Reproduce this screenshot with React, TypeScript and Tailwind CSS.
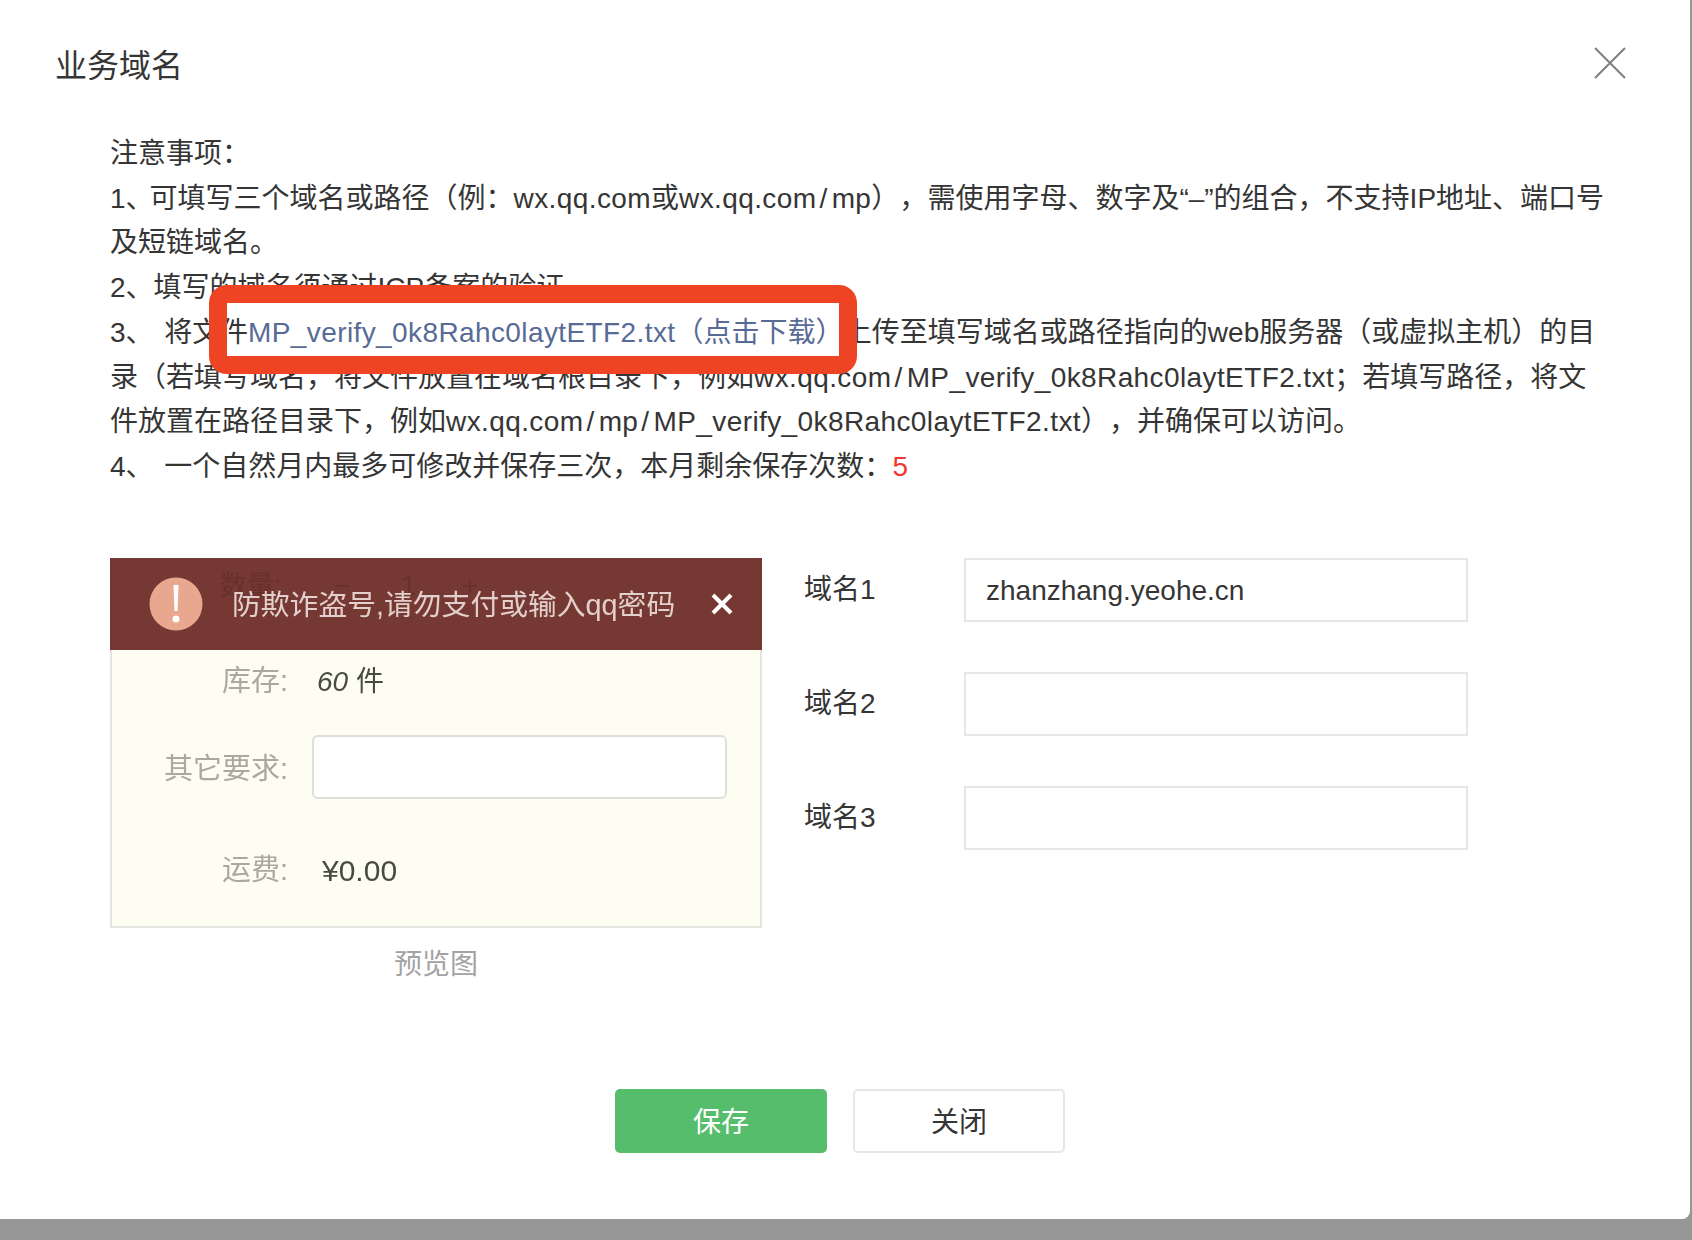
import type { ReactNode } from 'react';

const fontStack = { fontFamily: '"Liberation Sans", "Noto Sans CJK SC", sans-serif' };

const domainRows = [
  { label: '域名1', value: 'zhanzhang.yeohe.cn' },
  { label: '域名2', value: '' },
  { label: '域名3', value: '' },
];

// latin runs in the notes sit a bit wider than Liberation Sans
function Latin({ children }: { children: ReactNode }) {
  return <span className="tracking-[0.4px]">{children}</span>;
}

function Slash() {
  return <span className="ml-[3px] mr-[4px]">/</span>;
}

function PreviewImage() {
  return (
    <div className="w-[652px] h-[370px] bg-[#fdfdf1] border-2 border-t-0 border-[#e4e4e0] box-border">
      {/* Warning banner */}
      <div className="relative h-[92px] -mx-[2px] bg-[#753833] flex items-center blur-[0.5px]">
        {/* faded form row showing through the banner */}
        <div className="absolute left-[110px] top-[8px] flex items-center text-[27px] text-[#683029]">
          <span>数量:</span>
          <span className="ml-[54px]">−</span>
          <span className="ml-[50px]">1</span>
          <span className="ml-[46px]">+</span>
        </div>
        <svg className="ml-[39px] shrink-0" width="54" height="54" viewBox="0 0 54 54">
          <ellipse cx="27" cy="27" rx="26.5" ry="26.5" fill="#e8a88f" />
          <path d="M24.5 8h5l-1 26h-3z" fill="#fff" />
          <circle cx="27" cy="42" r="3.5" fill="#fff" />
        </svg>
        <span className="relative ml-[29px] pt-[3px] text-[28.8px] leading-none text-[#e3cfcb] whitespace-nowrap">防欺诈盗号,请勿支付或输入qq密码</span>
        <svg className="relative ml-[36px]" width="22" height="22" viewBox="0 0 22 22">
          <path d="M2 2l18 18M20 2L2 20" stroke="#fff" strokeWidth="4" />
        </svg>
      </div>
      <div className="blur-[0.5px]">
        <div className="flex items-center h-[64px] pt-[1px]">
          <span className="w-[176px] text-right text-[29px] text-[#a9a9a2]">库存:</span>
          <span className="ml-[29px] text-[28px] text-[#4a4a44]"><span className="italic">60</span> 件</span>
        </div>
        <div className="flex items-center mt-[21px]">
          <span className="w-[176px] pt-[6px] text-right text-[29px] text-[#a9a9a2]">其它要求:</span>
          <div className="ml-[24px] w-[415px] h-[64px] bg-white border-2 border-[#dededa] rounded-[6px]" />
        </div>
        <div className="flex items-center h-[64px] mt-[39px] pt-[2px]">
          <span className="w-[176px] text-right text-[29px] text-[#a9a9a2]">运费:</span>
          <span className="ml-[34px] text-[30px] text-[#4a4a44]">¥0.00</span>
        </div>
      </div>
    </div>
  );
}

export default function App() {
  return (
    <div className="h-[1240px] w-[1692px] bg-[#959695] overflow-hidden text-[#353535]" style={fontStack}>
      <div className="w-[1690px] h-[1219px] bg-white rounded-br-[8px]">
        {/* Header */}
        <div className="h-[132px] flex justify-between items-start pl-[55px] pr-[64px]">
          <h3 className="mt-[45px] text-[32px] leading-[42px] font-normal">业务域名</h3>
          <svg className="mt-[47px]" width="32" height="32" viewBox="0 0 32 32">
            <path d="M1 1l30 30M31 1L1 31" stroke="#7f7f7f" strokeWidth="2" fill="none" />
          </svg>
        </div>

        <div className="pl-[110px]">
          {/* Notes */}
          <div className="text-[28px] leading-[44.7px] whitespace-nowrap">
            <div>注意事项&#xFF1A;</div>
            <div><span className="-mr-[4px]">1、</span>可填写三个域名或路径&#xFF08;例&#xFF1A;<Latin>wx.qq.com</Latin>或<Latin>wx.qq.com<Slash />mp</Latin>&#xFF09;<span className="ml-[14px]">&#xFF0C;</span>需使用字母、数字及“–”的组合&#xFF0C;不支持IP地址、端口号</div>
            <div>及短链域名。</div>
            <div>2、填写的域名须通过ICP备案的验证。</div>
            <div className="relative">
              3、<span className="ml-[3px]"> 将文件</span><Latin>MP_verify_0k8Rahc0laytETF2.txt</Latin>&#xFF08;点击下载&#xFF09;上传至填写域名或路径指向的web服务器&#xFF08;或虚拟主机&#xFF09;的目
              {/* Red annotation box over the text */}
              <div className="absolute left-[99px] top-[-26px] w-[648px] h-[89px] box-border border-[18px] border-[#ee4423] rounded-[18px] bg-white overflow-hidden flex items-center pt-[8px]">
                <span className="text-[#353535] -ml-[7px]">件</span>
                <span className="text-[#576b95] whitespace-nowrap"><Latin>MP_verify_0k8Rahc0laytETF2.txt</Latin>&#xFF08;点击下载&#xFF09;</span>
              </div>
            </div>
            <div>录&#xFF08;若填写域名&#xFF0C;将文件放置在域名根目录下&#xFF0C;例如<Latin>wx.qq.com<Slash />MP_verify_0k8Rahc0laytETF2.txt</Latin>&#xFF1B;若填写路径&#xFF0C;将文</div>
            <div>件放置在路径目录下&#xFF0C;例如<Latin>wx.qq.com<Slash />mp<Slash />MP_verify_0k8Rahc0laytETF2.txt</Latin>&#xFF09;<span className="ml-[14px]">&#xFF0C;</span>并确保可以访问。</div>
            <div>4、<span className="ml-[3px]"> 一个自然月内最多可修改并保存三次&#xFF0C;本月剩余保存次数&#xFF1A;</span><span className="text-[#f43530]">5</span></div>
          </div>

          {/* Preview + domain form */}
          <div className="mt-[68px] flex">
            <div>
              <PreviewImage />
              <div className="mt-[15px] text-center text-[28px] leading-[44px] text-[#a3a3a3]">预览图</div>
            </div>
            <div className="ml-[44px] flex flex-col gap-[50px]">
              {domainRows.map(row => (
                <div key={row.label} className="flex items-center">
                  <label className="w-[160px] -ml-[2px] text-[28px] whitespace-nowrap">{row.label}</label>
                  <div className="w-[504px] h-[64px] box-border border-2 border-[#e7e7eb] flex items-center pl-[20px] pt-[3px] text-[28px]">
                    {row.value}
                  </div>
                </div>
              ))}
            </div>
          </div>
        </div>

        {/* Footer buttons */}
        <div className="mt-[102px] pl-[615px] flex gap-[26px]">
          <button className="w-[212px] h-[64px] pt-[4px] bg-[#56bd6c] rounded-[5px] text-white text-[28px]">保存</button>
          <button className="w-[212px] h-[64px] pt-[4px] bg-white border-2 border-[#e7e7eb] rounded-[5px] text-[#353535] text-[28px]">关闭</button>
        </div>
      </div>
    </div>
  );
}
